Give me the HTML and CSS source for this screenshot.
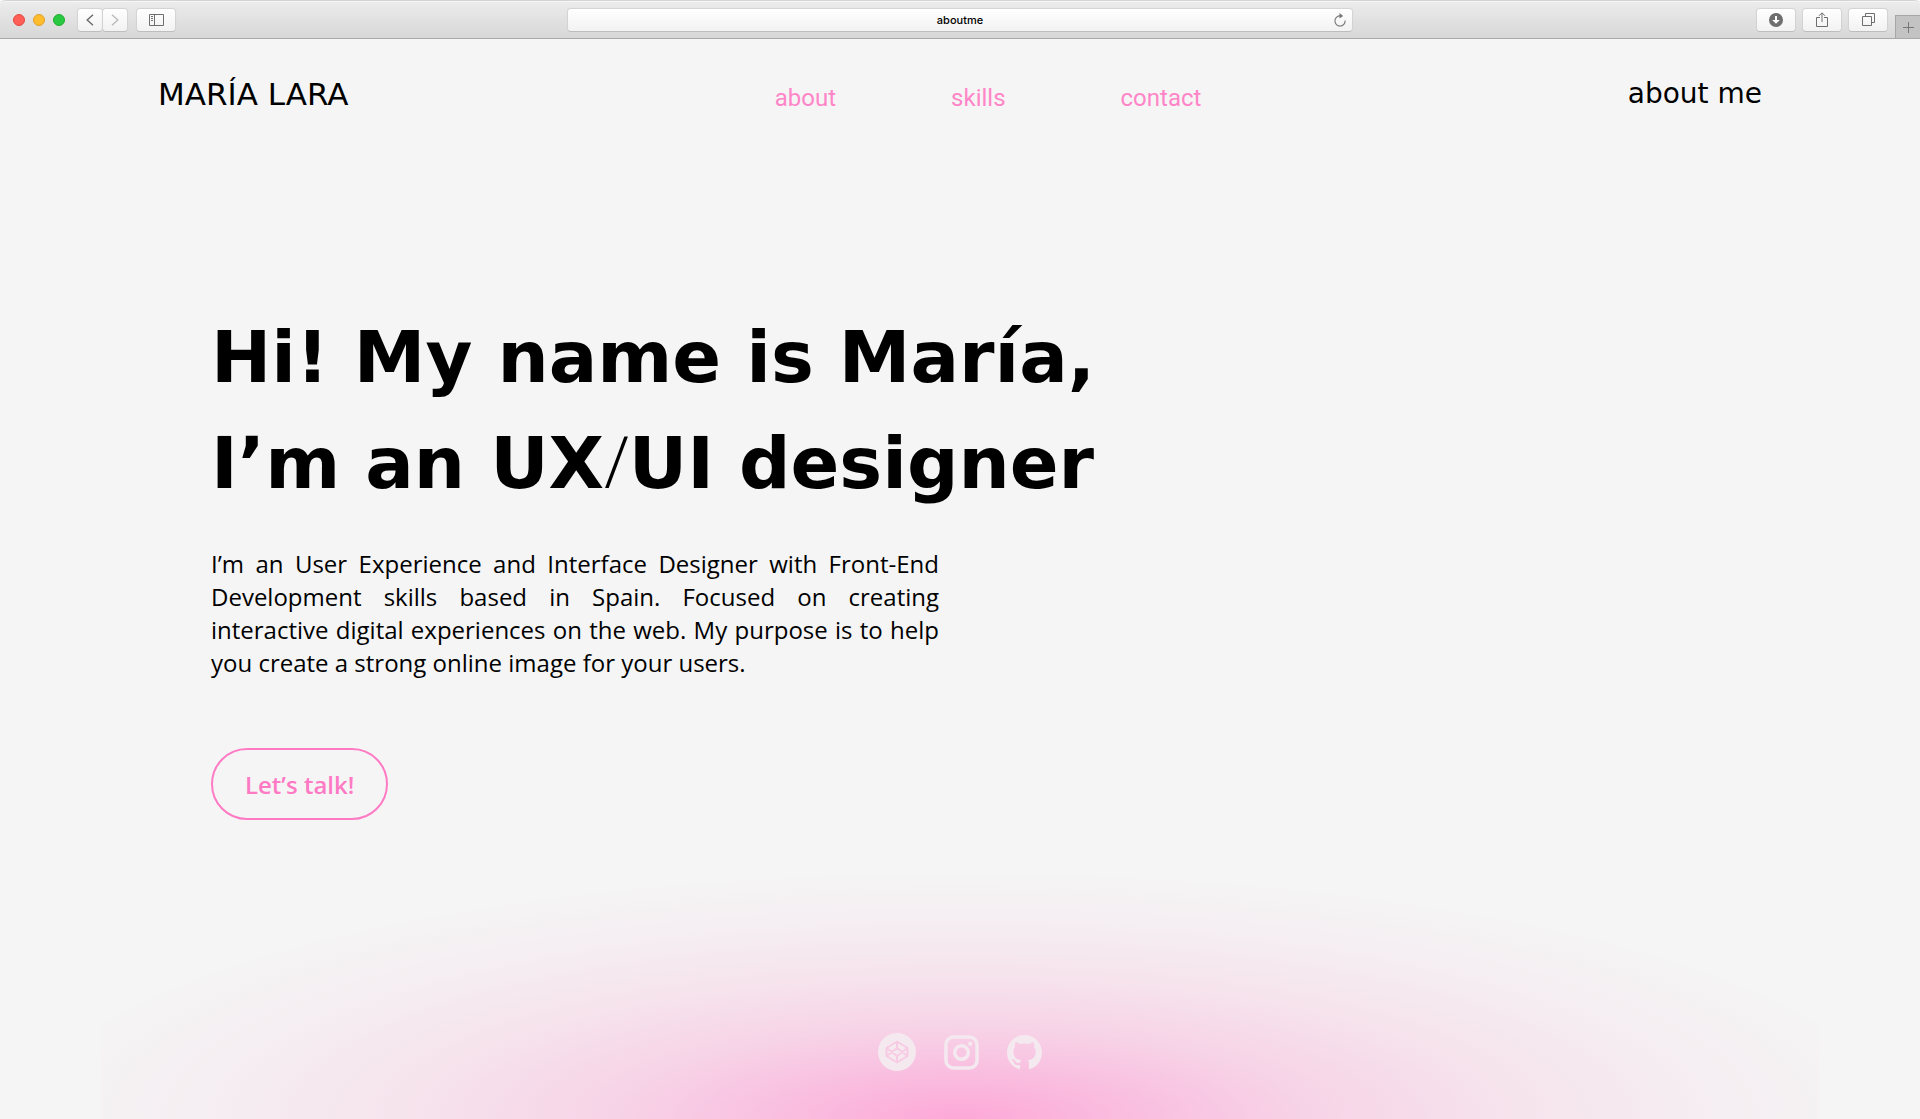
FILE: index.html
```html
<!DOCTYPE html>
<html lang="en">
<head>
<meta charset="utf-8">
<meta name="viewport" content="width=device-width, initial-scale=1">
<title>aboutme</title>
<link rel="stylesheet" href="styles.css">
</head>
<body>
<div class="toolbar">
  <div class="toolbar-left">
    <div class="lights"><span class="light red"></span><span class="light yellow"></span><span class="light green"></span></div>
    <div class="history">
      <button class="tool half" type="button" aria-label="Back"><svg width="8" height="12" viewBox="0 0 8 12"><path d="M7 .7 1.2 6 7 11.3" fill="none" stroke="#6e6e6e" stroke-width="1.5"/></svg></button>
      <button class="tool half" type="button" aria-label="Forward"><svg width="8" height="12" viewBox="0 0 8 12"><path d="M1 .7 6.8 6 1 11.3" fill="none" stroke="#bdbdbd" stroke-width="1.5"/></svg></button>
    </div>
    <button class="tool" type="button" aria-label="Sidebar"><svg width="15" height="12" viewBox="0 0 15 12" fill="none" stroke="#6e6e6e"><path d="M.5.5h14v11H.5zM5.5.5v11M2 2.5h2M2 4.5h2M2 6.5h2"/></svg></button>
  </div>
  <div class="address">
    <input class="address-input" type="text" value="aboutme" aria-label="Address">
    <button class="reload" type="button" aria-label="Reload"><svg width="12" height="14" viewBox="0 0 12 14"><path d="M6.500 2.900A5.100 5.100 0 1 0 11.100 7.500" fill="none" stroke="#777" stroke-width="1.1"/><path d="M5.500 0 9.200 2.900 5.500 5.400z" fill="#777"/></svg></button>
  </div>
  <div class="toolbar-right">
    <button class="tool" type="button" aria-label="Downloads"><svg width="14" height="14" viewBox="0 0 14 14"><circle cx="7" cy="7" r="7" fill="#6e6e6e"/><path d="M6 3h2v4h2.8L7 10.8 3.2 7H6z" fill="#fff"/></svg></button>
    <button class="tool" type="button" aria-label="Share"><svg width="12" height="16" viewBox="0 0 12 16" fill="none" stroke="#6e6e6e"><path d="M4 5.5H.5v9h11v-9H8M6 10V1M3 3.8 6 .8l3 3"/></svg></button>
    <button class="tool" type="button" aria-label="Tabs"><svg width="13" height="13" viewBox="0 0 13 13" fill="none" stroke="#6e6e6e"><path d="M.5 3.5h9v9h-9zM3.5 3.5v-3h9v9h-3"/></svg></button>
    <button class="new-tab" type="button" aria-label="New tab"><svg width="11" height="11" viewBox="0 0 11 11"><path d="M5.5 0v11M0 5.5h11" stroke="#777"/></svg></button>
  </div>
</div>
<header class="site-header">
  <a class="brand" href="#">MARÍA LARA</a>
  <nav class="menu"><a href="#about">about</a><a href="#skills">skills</a><a href="#contact">contact</a></nav>
  <span class="page-name">about me</span>
</header>
<main class="hero" id="about">
  <h1 class="headline">Hi! My name is María,<br>I’m an UX<span class="slash">/</span>UI designer</h1>
  <p class="intro">I’m an User Experience and Interface Designer with Front-End Development skills based in Spain. Focused on creating interactive digital experiences on the web. My purpose is to help you create a strong online image for your users.</p>
  <button class="talk" type="button">Let’s talk!</button>
</main>
<footer class="site-footer" id="contact">
  <a class="social" href="#codepen" aria-label="CodePen"><svg width="38" height="38" viewBox="0 0 38 38"><circle cx="19" cy="19" r="19" fill="#f5e9f0"/><path d="M19 8.5 29.5 15v8L19 29.5 8.5 23v-8zM19 8.5V15M19 23v6.500M8.500 15 19 23l10.500-8M8.500 23 19 15l10.500 8" fill="none" stroke="#f8cbe4" stroke-width="2" stroke-linejoin="round"/></svg></a>
  <a class="social" href="#instagram" aria-label="Instagram"><svg width="35" height="35" viewBox="0 0 36 36"><rect x="2" y="2" width="32" height="32" rx="8" fill="none" stroke="#f5e9f0" stroke-width="3.600"/><circle cx="18" cy="18" r="7" fill="none" stroke="#f5e9f0" stroke-width="3.600"/><circle cx="27" cy="9" r="2.200" fill="#f5e9f0"/></svg></a>
  <a class="social" href="#github" aria-label="GitHub"><svg width="35" height="35" viewBox="0 0 16 16"><path fill="#f5e9f0" d="M8 0C3.580 0 0 3.580 0 8c0 3.540 2.290 6.530 5.470 7.590.4.070.55-.17.55-.38 0-.19-.01-.82-.01-1.490-2.010.37-2.530-.49-2.690-.94-.09-.23-.48-.94-.82-1.130-.28-.15-.68-.52-.01-.53.63-.01 1.080.58 1.230.82.72 1.210 1.870.87 2.330.66.070-.52.28-.87.51-1.070-1.780-.2-3.640-.89-3.640-3.950 0-.87.31-1.590.82-2.150-.08-.2-.36-1.020.08-2.120 0 0 .67-.21 2.200.82.640-.18 1.320-.27 2-.27s1.360.09 2 .27c1.530-1.040 2.200-.82 2.200-.82.440 1.100.16 1.920.08 2.120.51.56.82 1.270.82 2.150 0 3.070-1.870 3.750-3.650 3.950.29.25.54.73.54 1.480 0 1.070-.01 1.930-.01 2.200 0 .21.15.46.55.38A8.010 8.010 0 0 0 16 8c0-4.420-3.580-8-8-8z"/></svg></a>
</footer>
</body>
</html>
```
FILE: styles.css
```css
* { box-sizing: border-box; }
body {
  margin: 0;
  min-height: 100vh;
  display: flex;
  flex-direction: column;
  background: #f5f5f5;
  color: #000;
  font-family: "Open Sans", sans-serif;
}
a { color: inherit; text-decoration: none; }
button { padding: 0; border: 0; font: inherit; cursor: pointer; }
svg { display: block; }

/* Browser toolbar */
.toolbar {
  height: 39px;
  flex: none;
  display: grid;
  grid-template-columns: 1fr minmax(0, 784px) 1fr;
  align-items: center;
  border-top: 1px solid #d4d4d4;
  border-bottom: 1px solid #a9a9a9;
  border-radius: 6px 6px 0 0;
  background: linear-gradient(#ececec, #d7d7d7);
  box-shadow: inset 0 1px #f6f6f6;
}
.toolbar-left { display: flex; align-items: center; padding-left: 13px; }
.lights { display: flex; gap: 8px; margin-right: 13px; }
.light { width: 12px; height: 12px; border-radius: 50%; }
.red { background: #ff5f57; border: 1px solid #e2483f; }
.yellow { background: #ffbd2e; border: 1px solid #e0a02a; }
.green { background: #28c940; border: 1px solid #1eae32; }
.history { display: flex; gap: 1px; margin-right: 10px; }
.tool {
  width: 38px;
  height: 22px;
  display: flex;
  align-items: center;
  justify-content: center;
  border-radius: 3px;
  background: linear-gradient(#fff, #f2f2f2);
  box-shadow: 0 1px #bdbdbd, 0 0 1px 1px #d2d2d2;
}
.half { width: 24px; }
.address {
  display: flex;
  height: 22px;
  padding: 0 6px 0 18px;
  align-items: center;
  border-radius: 3px;
  background: linear-gradient(#fff, #f2f2f2);
  box-shadow: 0 1px #bdbdbd, 0 0 1px 1px #d2d2d2;
}
.address-input {
  flex: 1;
  min-width: 0;
  padding: 0;
  border: 0;
  background: none;
  color: #000;
  text-align: center;
  font: 500 11px/16px Inter, sans-serif;
}
.reload { background: none; }
.toolbar-right { display: flex; align-items: center; justify-content: flex-end; gap: 8px; height: 100%; }
.new-tab {
  width: 25px;
  height: 23px;
  align-self: flex-end;
  display: flex;
  align-items: center;
  justify-content: center;
  border: 1px solid #a6a6a6;
  border-width: 1px 0 0 1px;
  background: #c3c3c3;
}

/* Page header */
.site-header {
  display: flex;
  align-items: flex-start;
  justify-content: space-between;
  padding: 39px 158px 0;
}
.brand, .page-name { font: 28px/32px "DejaVu Sans", sans-serif; }
.brand { font-size: 31px; }
.menu { display: flex; gap: 115px; color: #ff85c8; font: 24px/40px Roboto, sans-serif; }

/* Introduction */
.hero {
  flex: 1;
  display: flex;
  flex-direction: column;
  align-items: flex-start;
  padding: 186px 211px 54px;
}
.headline { margin: 0; font: bold 72px/106px "DejaVu Sans", sans-serif; }
.slash { font-family: "Open Sans", sans-serif; font-weight: 300; line-height: 1; }
.intro { margin: 31px 0 0; max-width: 728px; font-size: 24px; line-height: 33px; text-align: justify; }
.talk {
  margin-top: 69px;
  padding: 0 32px;
  height: 72px;
  border: 2px solid #ff7ac4;
  border-radius: 36px;
  background: none;
  color: #ff7ac4;
  font-size: 24px;
  font-weight: 600;
}

/* Social links over the pink glow */
.site-footer {
  height: 245px;
  margin: 0 101px;
  padding-bottom: 48px;
  display: flex;
  align-items: flex-end;
  justify-content: center;
  gap: 28px;
  background: radial-gradient(ellipse 929px 245px at 50% 100%, #fda8d7 0%, #f9bfe0 20%, #f7d3e7 37%, #f6e2ec 57%, #f5ecf1 77%, #f5f1f3 90%, #f5f4f4 100%, #f5f5f5 100%);
}
.social { height: 38px; display: flex; align-items: center; }
```
